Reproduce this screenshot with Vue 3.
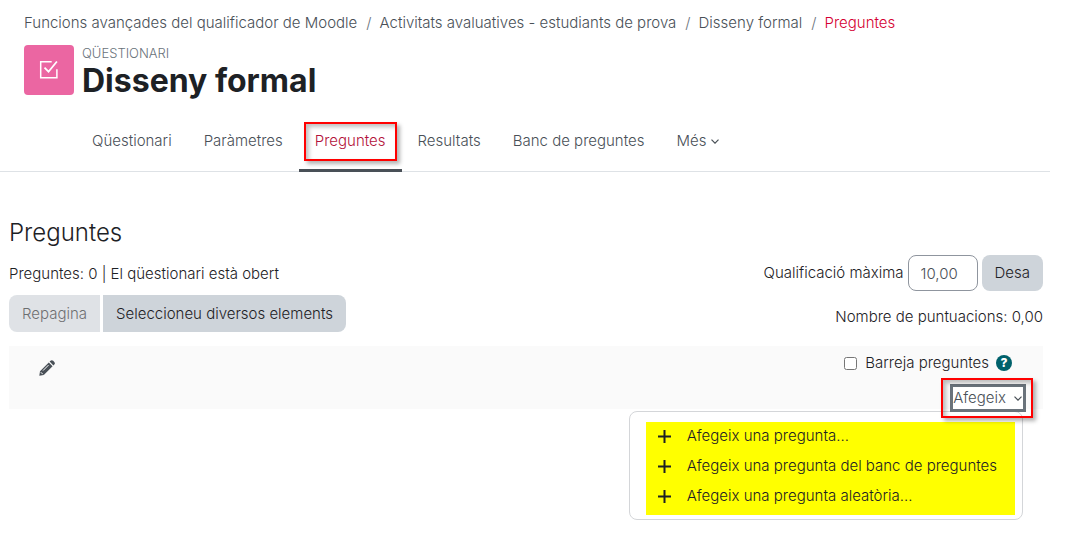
<script setup>
import { ref } from 'vue'

const crumbs = [
  'Funcions avançades del qualificador de Moodle',
  'Activitats avaluatives - estudiants de prova',
  'Disseny formal',
  'Preguntes'
]
const tabs = ['Qüestionari', 'Paràmetres', 'Preguntes', 'Resultats', 'Banc de preguntes', 'Més']
const options = [
  'Afegeix una pregunta...',
  'Afegeix una pregunta del banc de preguntes',
  'Afegeix una pregunta aleatòria...'
]
const grade = ref('10,00')
const shuffle = ref(false)
</script>

<template>
  <div class="page">
    <header class="header">
      <nav class="crumbs" aria-label="Ruta de navegació">
        <template v-for="(c, i) in crumbs" :key="c">
          <span v-if="i" class="slash">/</span>
          <a href="#" :class="{ current: i === crumbs.length - 1 }">{{ c }}</a>
        </template>
      </nav>
      <div class="heading">
        <div class="badge">
          <svg width="20" height="20" viewBox="0 0 20 20" fill="none" stroke="#fff" stroke-width="1.5">
            <path d="M12.700 1.700H1.700v16h16.200V9.300" />
            <path d="M5.500 7.700l4 4L17.900 1.500" stroke-width="1.800" />
          </svg>
        </div>
        <div>
          <div class="kind">QÜESTIONARI</div>
          <h1>Disseny formal</h1>
        </div>
      </div>
    </header>

    <nav class="tabs" aria-label="Qüestionari">
      <a v-for="t in tabs" :key="t" href="#" class="tab" :class="{ active: t === 'Preguntes' }">
        {{ t }}
        <svg v-if="t === 'Més'" class="caret" width="8" height="5" viewBox="0 0 8 5" fill="none" stroke="currentColor" stroke-width="1.200"><path d="M.5.700 4 4.200 7.500.700" /></svg>
      </a>
    </nav>

    <main class="main">
      <h2>Preguntes</h2>
      <div class="controls">
        <div>
          <p class="status">Preguntes: 0 | El qüestionari està obert</p>
          <div class="group">
            <button type="button" class="btn first" disabled>Repagina</button>
            <button type="button" class="btn last">Seleccioneu diversos elements</button>
          </div>
        </div>
        <div class="right">
          <form class="grade" @submit.prevent>
            <label for="grade">Qualificació màxima</label>
            <input id="grade" v-model="grade" type="text" />
            <button type="submit" class="btn save">Desa</button>
          </form>
          <p class="marks">Nombre de puntuacions: 0,00</p>
        </div>
      </div>

      <section class="section">
        <button type="button" class="pencil" aria-label="Edita l'encapçalament">
          <svg width="16" height="16" viewBox="0 0 16 16">
            <path fill="#495057" d="M.3 15.700 1 11.200 9.800 2.400l3.800 3.800-8.800 8.800zM10.600 1.600l.9-.9c.8-.8 1.900-.7 2.700.1l1.100 1.100c.8.8.8 1.900 0 2.700l-.9.9z" />
            <path fill="none" stroke="#fafafa" stroke-width="1" d="m4 10.600 5.500-5.500M1.800 12.200l2 2" />
          </svg>
        </button>
        <div class="tools">
          <div class="shuffle">
            <input id="shuffle" v-model="shuffle" type="checkbox" />
            <label for="shuffle">Barreja preguntes</label>
            <button type="button" class="help" aria-label="Ajuda">?</button>
          </div>
          <div class="add">
            <button type="button" class="add-button" aria-expanded="true">
              Afegeix
              <svg class="caret" width="8" height="5" viewBox="0 0 8 5" fill="none" stroke="currentColor" stroke-width="1.200"><path d="M.5.700 4 4.200 7.500.700" /></svg>
            </button>
            <div class="menu">
              <div class="marked">
                <a v-for="o in options" :key="o" href="#" class="item">
                  <svg width="13" height="13" viewBox="0 0 13 13" stroke="#1d2125" stroke-width="2"><path d="M0 6.500h13M6.500 0v13" /></svg>
                  {{ o }}
                </a>
              </div>
            </div>
          </div>
        </div>
      </section>
    </main>
  </div>
</template>

<style>
body {
  margin: 0;
  background: #fff;
}
</style>

<style scoped>
.page {
  box-sizing: border-box;
  min-height: 100vh;
  font-family: Inter, "Liberation Sans", sans-serif;
  font-size: 15px;
  line-height: 24px;
  font-weight: 300;
  color: #1d2125;
}
a {
  color: inherit;
  text-decoration: none;
}
h1, h2, p {
  margin: 0;
}
button, input {
  font: inherit;
  color: inherit;
  box-sizing: border-box;
  margin: 0;
}
.header {
  padding: 11px 24px 0;
}
.crumbs {
  display: flex;
  gap: 8px;
  color: #495057;
  white-space: nowrap;
}
.slash {
  padding-left: 1px;
  color: #6a737b;
}
.crumbs .current {
  color: #d50032;
}
.heading {
  display: flex;
  gap: 8px;
  margin-top: 10px;
}
.badge {
  display: flex;
  align-items: center;
  justify-content: center;
  width: 50px;
  height: 50px;
  border-radius: 4px;
  background: #eb66a2;
}
.kind {
  font-size: 13px;
  line-height: 16px;
  color: #6a737b;
}
h1 {
  font-size: 32px;
  line-height: 40px;
  font-weight: 700;
}
.tabs {
  display: flex;
  margin-top: 9px;
  margin-right: 15px;
  padding-left: 76px;
  border-bottom: 1px solid #dee2e6;
  color: #495057;
}
.tab {
  position: relative;
  box-sizing: border-box;
  height: 62px;
  margin-bottom: -1px;
  padding: 19px 16px 0;
  border-bottom: 3px solid transparent;
  white-space: nowrap;
}
.tab.active {
  color: #b3123a;
  border-color: #495057;
}
.tab.active::after {
  content: "";
  position: absolute;
  inset: 12px 5px 8px;
  border: 2px solid #f00;
  box-shadow: 3px 3px 4px rgba(0, 0, 0, .3), inset 3px 3px 4px rgba(0, 0, 0, .25);
}
.caret {
  vertical-align: middle;
}
.main {
  padding: 44px 22px 0 9px;
}
h2 {
  font-size: 24px;
  line-height: 34px;
  font-weight: 300;
}
.controls {
  display: flex;
  justify-content: space-between;
  margin-top: 5px;
}
.status {
  margin-top: 7px;
}
.group {
  display: flex;
  gap: 3px;
  margin-top: 9px;
}
.btn {
  height: 37px;
  padding: 0 13px;
  border: 0;
  border-radius: 8px;
  background: #ced4da;
}
.btn.first {
  border-radius: 8px 0 0 8px;
  opacity: .65;
}
.btn.last {
  border-radius: 0 8px 8px 0;
}
.grade {
  display: flex;
  align-items: center;
  gap: 4px;
}
.grade input {
  width: 70px;
  height: 36px;
  padding: 0 12px;
  border: 1px solid #8f959e;
  border-radius: 8px;
  color: #495057;
  background: #fff;
}
.grade .save {
  height: 36px;
}
.marks {
  margin-top: 14px;
  text-align: right;
}
.section {
  display: flex;
  justify-content: space-between;
  box-sizing: border-box;
  height: 63px;
  margin-top: 14px;
  padding: 5px 17px 0 30px;
  background: #fafafa;
}
.pencil {
  align-self: flex-start;
  margin-top: 9px;
  padding: 0;
  border: 0;
  background: none;
  line-height: 0;
}
.tools {
  display: flex;
  flex-direction: column;
  align-items: flex-end;
}
.shuffle {
  display: flex;
  align-items: center;
  padding-right: 14px;
}
.shuffle input {
  width: 13px;
  height: 13px;
  margin-right: 8px;
}
.help {
  width: 16px;
  height: 16px;
  margin-left: 7px;
  padding: 0;
  border: 0;
  border-radius: 50%;
  background: #00616b;
  color: #fff;
  font-size: 12px;
  line-height: 16px;
  font-weight: 800;
}
.add {
  position: relative;
  margin-top: 9px;
}
.add-button {
  position: relative;
  z-index: 1;
  display: flex;
  align-items: center;
  gap: 8px;
  height: 28px;
  padding: 0 1px 0 0;
  border: 3px solid #6a737b;
  background: #fff;
  color: #495057;
}
.add::after {
  content: "";
  position: absolute;
  z-index: 2;
  inset: -6px -7px -6px -9px;
  border: 2px solid #f00;
  box-shadow: 3px 3px 4px rgba(0, 0, 0, .3), inset 3px 3px 4px rgba(0, 0, 0, .25);
  pointer-events: none;
}
.menu {
  position: absolute;
  top: 27px;
  right: 3px;
  padding: 10px 7px 4px 16px;
  border: 1px solid #d4d6d9;
  border-radius: 8px;
  background: #fff;
}
.marked {
  padding: 0 18px 5px 12px;
  background: #ff0;
}
.item {
  display: flex;
  align-items: center;
  gap: 16px;
  height: 28px;
  white-space: nowrap;
}
.item + .item {
  margin-top: 2px;
}
</style>
